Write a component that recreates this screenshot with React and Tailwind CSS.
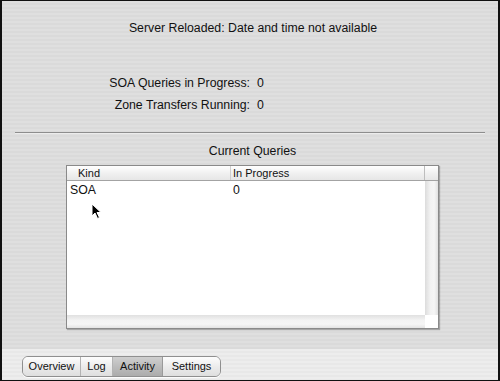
export default function App() {
  const font = "font-['Liberation_Sans','Helvetica',sans-serif]";
  return (
    <div className={`relative w-[500px] h-[381px] border-l-2 border-r-2 border-b border-t border-[#111] flex flex-col text-[#111] ${font}`}>
      <div className="flex-1 flex flex-col bg-[repeating-linear-gradient(to_bottom,#dfdfdf_0px,#dfdfdf_2px,#dadada_2px,#dadada_4px)]">
        <div className="h-[20px]" />
        <div className="text-center pl-[6px] text-[12.3px] leading-[15px]">Server Reloaded: Date and time not available</div>
        <div className="h-[40px]" />
        <div className="flex flex-col gap-[7px] text-[12.3px] leading-[15px]">
          <div className="flex">
            <div className="w-[248px] text-right">SOA Queries in Progress:</div>
            <div className="pl-[7px]">0</div>
          </div>
          <div className="flex">
            <div className="w-[248px] text-right">Zone Transfers Running:</div>
            <div className="pl-[7px]">0</div>
          </div>
        </div>
        <div className="h-[19px]" />
        <div className="mx-[13px] h-[2px] border-t border-[#8d8d8d] border-b border-b-[#ececec]" />
        <div className="h-[10px]" />
        <div className="text-center pl-[5px] text-[12.3px] leading-[15px]">Current Queries</div>
        <div className="h-[6px]" />
        <div className="ml-[64px] w-[373px] h-[164px] border border-[#8a8a8a] shadow-[1px_1px_1px_rgba(0,0,0,0.25)] bg-white flex flex-col">
          <div className="flex h-[15px] border-b border-[#a3a3a3] bg-[linear-gradient(to_bottom,#ffffff,#f1f1f1_50%,#e6e6e6)] text-[11px] leading-[14px]">
            <div className="w-[164px] pl-[11px] border-r border-[#cfcfcf]">Kind</div>
            <div className="flex-1 pl-[2px] border-r border-[#bdbdbd]">In Progress</div>
            <div className="w-[13px]" />
          </div>
          <div className="flex-1 flex">
            <div className="flex-1 flex flex-col">
              <div className="flex text-[12.3px] leading-[15px] pt-[2px]">
                <div className="w-[165px] pl-[3px]">SOA</div>
                <div className="pl-[1px]">0</div>
              </div>
            </div>
            <div className="w-[13px] bg-[linear-gradient(to_right,#dcdcdc,#f2f2f2_40%,#f6f6f6_70%,#e2e2e2)]" />
          </div>
          <div className="flex h-[13px]">
            <div className="flex-1 bg-[linear-gradient(to_bottom,#e0e0e0,#f3f3f3_40%,#f6f6f6_70%,#e4e4e4)]" />
            <div className="w-[13px] bg-white" />
          </div>
        </div>
        <div className="flex-1" />
      </div>
      <div className="h-[31px] flex items-start pl-[20px] pt-[7px] bg-[repeating-linear-gradient(to_bottom,#ededed_0px,#ededed_2px,#e8e8e8_2px,#e8e8e8_4px)]">
        <div className="flex h-[21px] border border-[#8f8f8f] rounded-[6px] overflow-hidden text-[11px] leading-[19px] shadow-[0_1px_0_rgba(255,255,255,0.8)]">
          <div className="w-[58px] text-center bg-[linear-gradient(to_bottom,#fdfdfd,#ececec_50%,#dedede)] border-r border-[#b3b3b3]">Overview</div>
          <div className="w-[32px] text-center bg-[linear-gradient(to_bottom,#fdfdfd,#ececec_50%,#dedede)] border-r border-[#b3b3b3]">Log</div>
          <div className="w-[50px] text-center bg-[linear-gradient(to_bottom,#cfcfcf,#bcbcbc_50%,#acacac)] border-r border-[#9a9a9a]">Activity</div>
          <div className="w-[57px] text-center bg-[linear-gradient(to_bottom,#fdfdfd,#ececec_50%,#dedede)]">Settings</div>
        </div>
      </div>
      <svg className="absolute left-[89px] top-[202px]" width="12" height="17" viewBox="0 0 12 17">
        <path d="M1 1 L1 13 L4 10 L6.5 15.5 L8.5 14.5 L6 9.5 L10 9.5 Z" fill="#000" stroke="#fff" strokeWidth="1" strokeLinejoin="round" />
      </svg>
    </div>
  );
}
